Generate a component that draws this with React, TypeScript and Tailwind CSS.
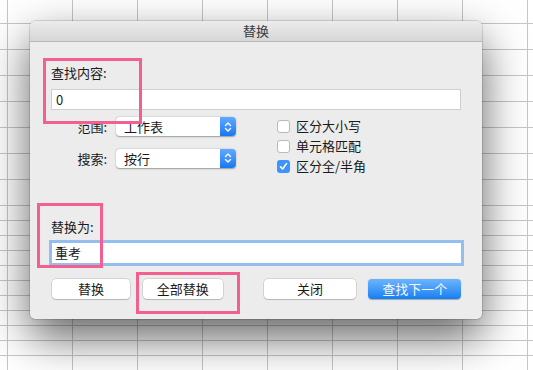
const FONT = "font-['Noto_Sans_CJK_SC','Noto_Sans',sans-serif]";

const rowHeights = [24, 26, 26, 26, 26, 26, 26, 26, 15, 15, 15, 15, 15, 15, 15, 15, 15, 15, 15, 15];

function SheetGrid() {
  return (
    <div className="absolute inset-0">
      <div className="absolute inset-0 flex">
        <div className="w-[8px] shrink-0 h-full border-r border-[#c6c6c6]" />
        {Array.from({ length: 9 }).map((_, i) => (
          <div key={i} className="w-[65px] shrink-0 h-full border-r border-[#c6c6c6]" />
        ))}
      </div>
      <div className="absolute inset-0 flex flex-col">
        {rowHeights.map((h, i) => (
          <div key={i} className="shrink-0 w-full border-b border-[#c6c6c6]" style={{ height: h }} />
        ))}
      </div>
    </div>
  );
}

function PopUp({ value }: { value: string }) {
  return (
    <div className="flex w-[120px] h-[19px] rounded-[4px] bg-white shadow-[0_0.5px_1.5px_rgba(0,0,0,0.35)]">
      <span className="flex-1 pl-[8px] text-[13px] leading-[19px] text-[#1a1a1a]">{value}</span>
      <span className="w-[16px] h-full rounded-r-[4px] bg-gradient-to-b from-[#5eaaff] to-[#1677f2] flex items-center justify-center">
        <svg width="8" height="12" viewBox="0 0 8 12" fill="none" stroke="#fff" strokeWidth="1.4" strokeLinecap="round" strokeLinejoin="round">
          <path d="M1.5 4.5 L4 2 L6.5 4.5" />
          <path d="M1.5 7.5 L4 10 L6.5 7.5" />
        </svg>
      </span>
    </div>
  );
}

function Check({ label, checked }: { label: string; checked?: boolean }) {
  return (
    <div className="flex items-center h-[20px] gap-[6px]">
      {checked ? (
        <span className="w-[13px] h-[13px] rounded-[3px] bg-[#3d95f9] flex items-center justify-center">
          <svg width="9" height="9" viewBox="0 0 9 9" fill="none" stroke="#fff" strokeWidth="1.6" strokeLinecap="round" strokeLinejoin="round">
            <path d="M1.5 4.8 L3.6 7 L7.5 1.6" />
          </svg>
        </span>
      ) : (
        <span className="w-[13px] h-[13px] rounded-[3px] bg-white border border-[#b9b9b9]" />
      )}
      <span className="text-[13px] leading-[16px] text-[#1a1a1a]">{label}</span>
    </div>
  );
}

function Btn({ label, w, primary }: { label: string; w: string; primary?: boolean }) {
  return (
    <div
      className={
        primary
          ? `${w} h-[20px] rounded-[4px] bg-gradient-to-b from-[#6ab4fb] to-[#0f7ff3] text-[#f4f8ff] text-[13px] leading-[20px] text-center shadow-[0_0.5px_1px_rgba(0,0,0,0.3)]`
          : `${w} h-[20px] rounded-[4px] bg-white text-[#1a1a1a] text-[13px] leading-[20px] text-center shadow-[0_0_0_0.5px_rgba(0,0,0,0.2),0_1px_1px_rgba(0,0,0,0.15)]`
      }
    >
      {label}
    </div>
  );
}

function Dialog() {
  return (
    <div className="absolute left-[30px] top-[21px] w-[452px] h-[298px] rounded-[5px] bg-[#ececec] shadow-[0_18px_45px_rgba(0,0,0,0.62),0_0_0_0.5px_rgba(0,0,0,0.25)] flex flex-col overflow-hidden">
      <div className="h-[21px] shrink-0 bg-gradient-to-b from-[#ececec] to-[#d6d6d6] border-b border-[#b8b8b8] flex items-center justify-center text-[13px] text-[#3a3a3a]">
        替换
      </div>
      <div className="flex flex-col px-[21px]">
        <div className="mt-[23px] h-[16px] text-[13px] leading-[16px] text-[#1a1a1a]">查找内容:</div>
        <div className="mt-[8px] h-[21px] w-[410px] bg-white border border-[#cfcfcf] pl-[4px] text-[13px] leading-[19px] text-[#1a1a1a]">0</div>

        <div className="mt-[7px] flex">
          <div className="flex flex-col gap-[12px]">
            <div className="flex items-center gap-[9px]">
              <span className="w-[56px] text-right text-[13px] text-[#1a1a1a]">范围:</span>
              <PopUp value="工作表" />
            </div>
            <div className="flex items-center gap-[9px]">
              <span className="w-[56px] text-right text-[13px] text-[#1a1a1a]">搜索:</span>
              <PopUp value="按行" />
            </div>
          </div>
          <div className="ml-[41px] flex flex-col -mt-[1px]">
            <Check label="区分大小写" />
            <Check label="单元格匹配" />
            <Check label="区分全/半角" checked />
          </div>
        </div>

        <div className="mt-[43px] h-[16px] text-[13px] leading-[16px] text-[#1a1a1a]">替换为:</div>
        <div className="mt-[8px] h-[20px] w-[409px] ml-[1px] bg-white shadow-[0_0_0_3px_#94bef0] pl-[3px] text-[13px] leading-[20px] text-[#1a1a1a]">重考</div>

        <div className="mt-[16px] flex items-center">
          <Btn label="替换" w="w-[78px] ml-[1px]" />
          <Btn label="全部替换" w="w-[80px] ml-[13px]" />
          <Btn label="关闭" w="w-[93px] ml-[41px]" />
          <Btn label="查找下一个" w="w-[93px] ml-[12px]" primary />
        </div>
      </div>
    </div>
  );
}

function Mark({ pos }: { pos: string }) {
  return <div className={`absolute ${pos} border-[3px] border-[#f3608f]`} />;
}

export default function App() {
  return (
    <div className={`relative w-[533px] h-[370px] overflow-hidden bg-white ${FONT}`}>
      <SheetGrid />
      <Dialog />
      <Mark pos="left-[43px] top-[58px] w-[99px] h-[66px]" />
      <Mark pos="left-[37px] top-[203px] w-[66px] h-[65px]" />
      <Mark pos="left-[136px] top-[272px] w-[104px] h-[42px]" />
    </div>
  );
}
